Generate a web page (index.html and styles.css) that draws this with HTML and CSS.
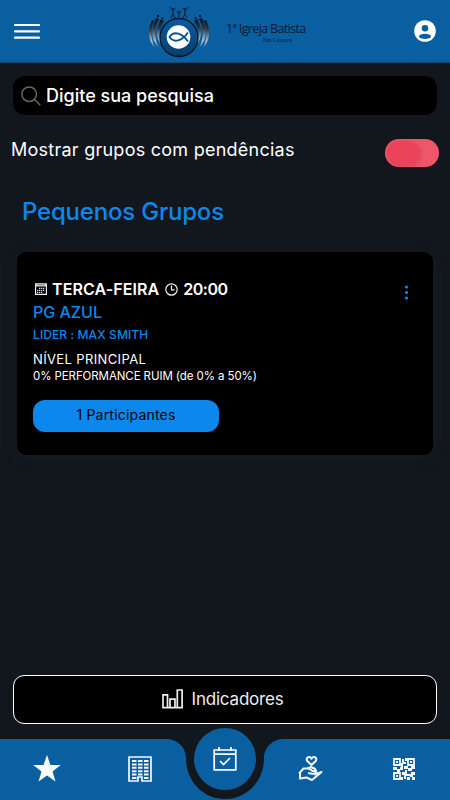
FILE: index.html
```html
<!DOCTYPE html>
<html lang="pt-BR">
<head>
<meta charset="utf-8">
<meta name="viewport" content="width=device-width">
<title>Pequenos Grupos</title>
<link rel="stylesheet" href="styles.css">
</head>
<body>
<header class="topbar">
  <svg class="menu" width="26" height="17" viewBox="0 0 26 17" stroke="#fff" stroke-width="2.200" stroke-linecap="round"><path d="M1 2h24M1 8.300h24M1 14.600h24"/></svg>
  <div class="brand">
    <svg width="64" height="52" viewBox="0 0 64 52">
      <defs>
        <linearGradient id="wing" x1="0" y1="0" x2="0" y2="1"><stop offset="0" stop-color="#06121e"/><stop offset=".35" stop-color="#293b4c"/><stop offset=".75" stop-color="#aebdca"/><stop offset="1" stop-color="#587da0"/></linearGradient>
        <linearGradient id="disc" x1="0" y1="0" x2="0" y2="1"><stop offset="0" stop-color="#0a5c9e"/><stop offset="1" stop-color="#063d70"/></linearGradient>
      </defs>
      <g fill="url(#wing)">
        <path d="M5 14C0 24 1 35 8 42C4 33 3 24 7 15z"/><path d="M9 12C3 23 4 34 12 42C7 32 7 23 12 13z"/><path d="M14 13C8 22 9 33 15 40C11 30 12 23 17 15z"/>
        <path d="M59 14C64 24 63 35 56 42C60 33 61 24 57 15z"/><path d="M55 12C61 23 60 34 52 42C57 32 57 23 52 13z"/><path d="M50 13C56 22 55 33 49 40C53 30 52 23 47 15z"/>
      </g>
      <g fill="#06121e"><circle cx="11" cy="10" r="1.200"/><circle cx="15.500" cy="12" r="1.100"/><circle cx="53" cy="10" r="1.200"/><circle cx="48.500" cy="12" r="1.100"/><circle cx="26" cy="3" r=".9"/><circle cx="32" cy="6" r=".8"/><circle cx="38" cy="3" r=".9"/></g>
      <path d="M23 1L26 5L28 2M26 5V8L24 12M26 8L28 12M30 5L32 8L34 5M32 8V11M36 2L38 5L41 1M38 5V8L36 12M38 8L40 12" fill="none" stroke="#06121e" stroke-width=".8"/>
      <circle cx="32" cy="31.500" r="19" fill="url(#disc)" stroke="#071624" stroke-width="1.300"/>
      <circle cx="31.500" cy="31" r="11.800" fill="#fff"/>
      <path d="M41 26.500C35 35 27 37.500 22.500 31C27 24.500 35 27 41 35.500" fill="none" stroke="#07528f" stroke-width="1.900"/>
    </svg>
    <div class="brand-text"><span class="brand-name">1ª Igreja Batista</span><span class="brand-place">Em Caruaru</span></div>
  </div>
  <svg class="user" width="22" height="22" viewBox="0 0 22 22"><circle cx="11" cy="11" r="10.800" fill="#fff"/><circle cx="11" cy="8.300" r="3.300" fill="#0a5fa0"/><ellipse cx="11" cy="16.400" rx="6" ry="2.600" fill="#0a5fa0"/></svg>
</header>
<main>
  <label class="search">
    <svg width="20" height="20" viewBox="0 0 20 20" fill="none" stroke="#686868" stroke-width="1.500"><circle cx="8.200" cy="8.200" r="7.300"/><path d="M13.500 13.500L19.300 19.300"/></svg>
    <span class="t-search">Digite sua pesquisa</span>
  </label>
  <div class="filter"><span class="t-filter">Mostrar grupos com pendências</span><span class="toggle"><span class="knob"></span></span></div>
  <h1>Pequenos Grupos</h1>
  <article class="card">
    <div class="when">
      <svg class="cal" width="12" height="12" viewBox="0 0 12 12"><path d="M.6 1.100H11.400V11.400H.6z" fill="#000" stroke="#fff" stroke-width="1.100"/><path d="M0 .5h12v3H0z" fill="#ddd"/><path d="M2 1.800h8" stroke="#667" stroke-width=".8"/><path d="M4 5.300h6M2 7.300h8M2 9.300h6" stroke="#cfdcff" stroke-width="1.200" stroke-dasharray="1.300 .7"/></svg>
      <span class="t-day">TERCA-FEIRA</span>
      <svg class="clock" width="13" height="13" viewBox="0 0 13 13" fill="none" stroke="#eee" stroke-width="1.200"><circle cx="6.500" cy="6.500" r="5.700"/><path d="M6.500 2.500V6.800H9.500"/></svg>
      <span class="t-hour">20:00</span>
    </div>
    <svg class="more" width="5" height="15" viewBox="0 0 5 15" fill="#0c88ec"><circle cx="2.500" cy="2" r="1.600"/><circle cx="2.500" cy="7.500" r="1.600"/><circle cx="2.500" cy="13" r="1.600"/></svg>
    <div class="group">PG AZUL</div>
    <div class="leader">LIDER : MAX SMITH</div>
    <div class="level">NÍVEL PRINCIPAL</div>
    <div class="perf">0% PERFORMANCE RUIM (de 0% a 50%)</div>
    <button class="members">1 Participantes</button>
  </article>
</main>
<button class="indicators">
  <svg width="22" height="20" viewBox="0 0 22 20" fill="none" stroke="#eee" stroke-width="1.700"><path d="M1 5.800h4.500v12.800H1zM8 10.200h5v8.400H8zM15.300 1h4.800v17.600h-4.800zM5 18.600h11"/></svg>
  <span class="t-ind">Indicadores</span>
</button>
<nav class="tabs">
  <svg class="tabs-shape" width="450" height="61" viewBox="0 0 450 61"><path d="M0 0H166C177 0 186 8 186 19C186 42 203 60 225 60S264 42 264 19C264 8 273 0 284 0H450V61H0z" fill="#0a5fa0"/></svg>
  <a class="tab"><svg width="28" height="27" viewBox="0 0 28 27"><path d="M14 0L17.400 9.900L27.800 10.100L19.500 16.500L22.500 26.500L14 20.600L5.500 26.500L8.500 16.500L.2 10.100L10.600 9.900z" fill="#fff"/></svg></a>
  <a class="tab"><svg width="24" height="26" viewBox="0 0 24 26"><path d="M1 1H23V25H14V21H10V25H1z" fill="none" stroke="#f4f7ff" stroke-width="1.700"/><path d="M4 5h4.500M10 5h4.500M16 5h4.500M4 8.400h4.500M10 8.400h4.500M16 8.400h4.500M4 11.800h4.500M10 11.800h4.500M16 11.800h4.500M4 15.200h4.500M10 15.200h4.500M16 15.200h4.500M4 18.600h4.500M10 18.600h4.500M16 18.600h4.500M4 22h4.500M16 22h4.500" stroke="#f4f7ff" stroke-width="2"/></svg></a>
  <a class="tab main-tab"><svg width="24" height="24" viewBox="0 0 24 24" fill="none" stroke="#fff" stroke-width="1.700"><path d="M1.200 3H22.800V22.800H1.200zM1.200 7.200H22.800M6 0V4M18 0V4M7 14L10.500 17.500L17 11"/></svg></a>
  <a class="tab"><svg width="25" height="25" viewBox="0 0 25 25" fill="none" stroke="#f4f7ff" stroke-width="2" stroke-linejoin="round"><path d="M13.500 9L9 4.700C7.500 1 12 -.1 13.500 2.700C15 -.1 19.500 1 18 4.700z"/><path d="M1 17.500L5.500 12.500H11L14.500 15H18C18 17.500 16 18 14 17.700L10 17M16 18.500L23.500 16L14 24L8.500 21.500L2 22.500V17"/><path d="M9.500 12.700L12.500 11L17 12.800L18 15"/></svg></a>
  <a class="tab"><svg width="22" height="22" viewBox="0 0 22 22" fill="none" stroke="#f4f7ff"><path d="M1 1h6v6H1zM15 1h6v6h-6zM1 15h6v6H1z" stroke-width="1.800"/><path d="M3 3h2v2H3zM17 3h2v2h-2zM3 17h2v2H3z" fill="#f4f7ff" stroke="none"/><path d="M9 1h2v3h2v2h-3v3H8V5h1zM12 0h2v3h-2zM0 9h4v2h3V9h3v3H7v2H4v-2H0zM11 8h4v2h3V8h4v3h-3v2h-4v-2h-4zM9 14h3v-2h2v4h3v2h-4v3h-2v-4H9zM18 14h4v3h-2v2h2v3h-3v-3h-2v-3h1zM14 19h3v3h-3zM8 19h2v3H8z" fill="#f4f7ff" stroke="none"/></svg></a>
</nav>
</body>
</html>
```
FILE: styles.css
```css
* { box-sizing: border-box; }
body { margin: 0; width: 450px; height: 800px; overflow: hidden; display: flex; flex-direction: column; background: #12171e; color: #fff; font-family: Inter, "Noto Sans", sans-serif; }
svg { display: block; flex: none; }
span { white-space: nowrap; }
button { font: inherit; cursor: pointer; }
.topbar { flex: none; height: 63px; background: #0a5fa0; border-bottom: 1px solid #12456f; display: flex; align-items: center; padding: 0 14px; }
.brand { display: flex; align-items: center; margin-left: 107px; padding-top: 2px; }
.brand-text { display: flex; flex-direction: column; margin-left: 15px; width: 80px; color: #061c33; }
.brand-name { font: 12.500px/16px "Open Sans", sans-serif; letter-spacing: -.65px; }
.brand-place { font: 6px/7px "Liberation Serif", serif; margin-left: 37px; }
.user { margin-left: auto; }
main { flex: 1; }
.search { display: flex; align-items: center; margin: 13px 13px 0; height: 39px; padding-left: 8px; gap: 5px; background: #000; border-radius: 12px; font-size: 18px; font-weight: 500; }
.t-search { padding-bottom: 1px; }
.filter { display: flex; justify-content: space-between; align-items: center; height: 28px; margin: 24px 11px 0; font-size: 18px; }
.t-filter { padding-bottom: 7px; letter-spacing: .25px; }
.toggle { width: 54px; height: 28px; border-radius: 14px; background: #ef5669; padding: 2px; }
.knob { display: block; width: 32px; height: 24px; border-radius: 12px; background: #ed435a; box-shadow: 1px 1px 5px rgba(150, 30, 50, .35); }
h1 { margin: 29px 22px 0; height: 32px; font-size: 24px; line-height: 32px; font-weight: 500; letter-spacing: -.2px; color: #0c88ec; }
.card { position: relative; height: 203px; margin: 24px 17px 0; padding: 27px 16px 0; background: #000; border-radius: 9px; box-shadow: 0 3px 12px rgba(24, 30, 34, .8); }
.when { display: flex; align-items: center; height: 20px; font-size: 16px; font-weight: 600; }
.cal { margin: 0 5px 0 2px; }
.t-day { letter-spacing: .1px; }
.t-hour { letter-spacing: -.5px; }
.clock { margin: 0 5px 0 6px; }
.more { position: absolute; right: 24px; top: 33px; }
.group { height: 25px; line-height: 26px; font-size: 16px; font-weight: 500; color: #0c88ec; }
.leader { height: 22px; line-height: 22px; font-size: 12px; font-weight: 500; letter-spacing: .1px; color: #0c88ec; }
.level { height: 20px; line-height: 27px; font-size: 13px; letter-spacing: .37px; }
.perf { height: 18px; line-height: 21px; font-size: 11.500px; letter-spacing: -.09px; white-space: nowrap; }
.members { display: block; width: 186px; height: 32px; margin-top: 16px; border: 0; border-radius: 12px; padding: 0 0 3px; background: #0c88ec; color: #000; font-size: 14px; letter-spacing: .2px; }
.indicators { flex: none; height: 49px; margin: 0 13px 15px; display: flex; align-items: center; justify-content: center; gap: 8px; padding: 0 5px 1px 0; background: #000; color: #eee; border: 1.500px solid #fff; border-radius: 11px; font-size: 17px; }
.t-ind { letter-spacing: -.2px; }
.tabs { position: relative; flex: none; height: 61px; display: grid; grid-template-columns: 93px 93px 78px 93px 93px; }
.tabs-shape { position: absolute; left: 0; top: 0; }
.tab { position: relative; display: flex; align-items: center; justify-content: center; padding-bottom: 2px; }
.main-tab { width: 62px; height: 62px; margin: -11px 0 0 8px; padding-bottom: 1px; border-radius: 50%; background: #0a5fa0; }
```
